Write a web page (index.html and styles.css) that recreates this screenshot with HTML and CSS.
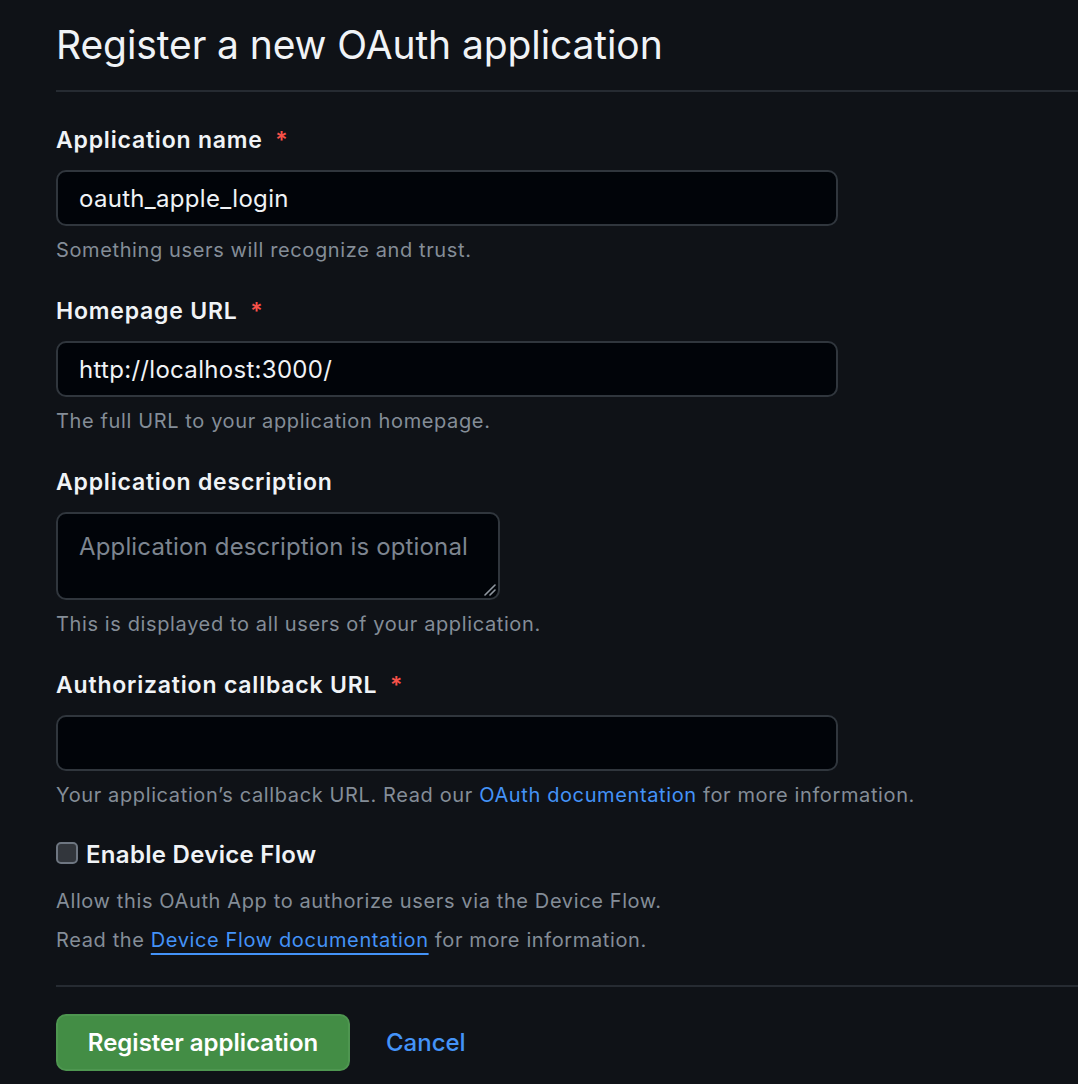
FILE: index.html
```html
<!DOCTYPE html>
<html lang="en">
<head>
<meta charset="utf-8">
<title>Register a new OAuth application</title>
<link rel="stylesheet" href="styles.css">
</head>
<body>
<main class="page">
  <h1 class="title">Register a new OAuth application</h1>
  <form class="form">
    <div class="field">
      <label class="label">Application name <span class="req">*</span></label>
      <input class="input" type="text" value="oauth_apple_login">
      <p class="note">Something users will recognize and trust.</p>
    </div>
    <div class="field">
      <label class="label">Homepage URL <span class="req">*</span></label>
      <input class="input" type="text" value="http://localhost:3000/">
      <p class="note">The full URL to your application homepage.</p>
    </div>
    <div class="field">
      <label class="label">Application description</label>
      <div class="ta-wrap">
        <textarea class="textarea" placeholder="Application description is optional"></textarea>
        <svg class="grip" width="14" height="14" viewBox="0 0 14 14"><path d="M13 3 L3 13 M13 8 L8 13" stroke="#9198a1" stroke-width="1.6" stroke-linecap="round"/></svg>
      </div>
      <p class="note">This is displayed to all users of your application.</p>
    </div>
    <div class="field">
      <label class="label">Authorization callback URL <span class="req">*</span></label>
      <input class="input" type="text" value="">
      <p class="note">Your application’s callback URL. Read our <a class="link" href="#">OAuth documentation</a> for more information.</p>
    </div>
    <div class="check-field">
      <label class="check-row"><span class="checkbox"></span><span class="check-label">Enable Device Flow</span></label>
      <p class="note note-first">Allow this OAuth App to authorize users via the Device Flow.</p>
      <p class="note note-second">Read the <a class="link link-under" href="#">Device Flow documentation</a> for more information.</p>
    </div>
    <div class="actions">
      <button class="btn-primary" type="button">Register application</button>
      <a class="cancel" href="#">Cancel</a>
    </div>
  </form>
</main>
</body>
</html>
```
FILE: styles.css
```css
* { box-sizing: border-box; }
html, body {
  margin: 0;
  padding: 0;
  background: #0f1217;
  color: #e6edf3;
  font-family: Inter, "Liberation Sans", sans-serif;
}
body { overflow: hidden; height: 1084px; }
.page {
  padding-left: 56px;
}
.title {
  margin: 0;
  padding: 20px 0 20px 0;
  font-size: 39px;
  line-height: 50px;
  font-weight: 400;
  letter-spacing: -0.1px;
  border-bottom: 2px solid #262b32;
  color: #f0f3f6;
}
.form {
  display: flex;
  flex-direction: column;
}
.field {
  display: flex;
  flex-direction: column;
  margin-top: 33px;
}
.field + .field { margin-top: 32px; }
.label {
  font-size: 23px;
  line-height: 30px;
  font-weight: 600;
  letter-spacing: 0.8px;
  margin-bottom: 15px;
  color: #f0f3f6;
}
.req { color: #f85149; margin-left: 6px; }
.input {
  width: 782px;
  height: 56px;
  background: #010409;
  border: 2px solid #30363d;
  border-radius: 10px;
  color: #f0f3f6;
  font-family: inherit;
  font-size: 24px;
  letter-spacing: 0.3px;
  padding: 0 21px;
  outline: none;
}
.ta-wrap {
  position: relative;
  width: 444px;
  height: 88px;
}
.textarea {
  display: block;
  width: 444px;
  height: 88px;
  background: #010409;
  border: 2px solid #30363d;
  border-radius: 10px;
  color: #f0f3f6;
  font-family: inherit;
  font-size: 24px;
  line-height: 30px;
  letter-spacing: 0.15px;
  padding: 18px 21px;
  resize: none;
  outline: none;
}
.textarea::placeholder { color: #7d8590; }
.grip {
  position: absolute;
  right: 4px;
  bottom: 4px;
}
.note {
  margin: 10px 0 0 0;
  font-size: 20px;
  line-height: 28px;
  letter-spacing: 0.62px;
  color: #848d97;
}
.link { color: #4493f8; text-decoration: none; }
.link-under { text-decoration: underline; text-underline-offset: 6px; text-decoration-thickness: 2px; }
.check-field {
  margin-top: 31px;
  display: flex;
  flex-direction: column;
}
.check-row {
  display: flex;
  align-items: center;
  gap: 8px;
  height: 30px;
}
.checkbox {
  width: 22px;
  height: 22px;
  border: 2px solid #6e7681;
  border-radius: 5px;
  background: #32363c;
  margin-top: -4px;
}
.check-label {
  font-size: 24px;
  font-weight: 600;
  line-height: 30px;
  letter-spacing: 0.3px;
  color: #f0f3f6;
}
.note-first { margin-top: 17px; }
.note-second { margin-top: 11px; }
.actions {
  margin-top: 31px;
  border-top: 2px solid #262b32;
  padding-top: 27px;
  display: flex;
  align-items: center;
  gap: 36px;
}
.btn-primary {
  width: 294px;
  height: 57px;
  background: #438d45;
  border: 2px solid #4e9650;
  border-radius: 10px;
  color: #ffffff;
  font-family: inherit;
  font-size: 24px;
  font-weight: 600;
}
.cancel {
  color: #4493f8;
  text-decoration: none;
  font-size: 24px;
  font-weight: 500;
}
```
